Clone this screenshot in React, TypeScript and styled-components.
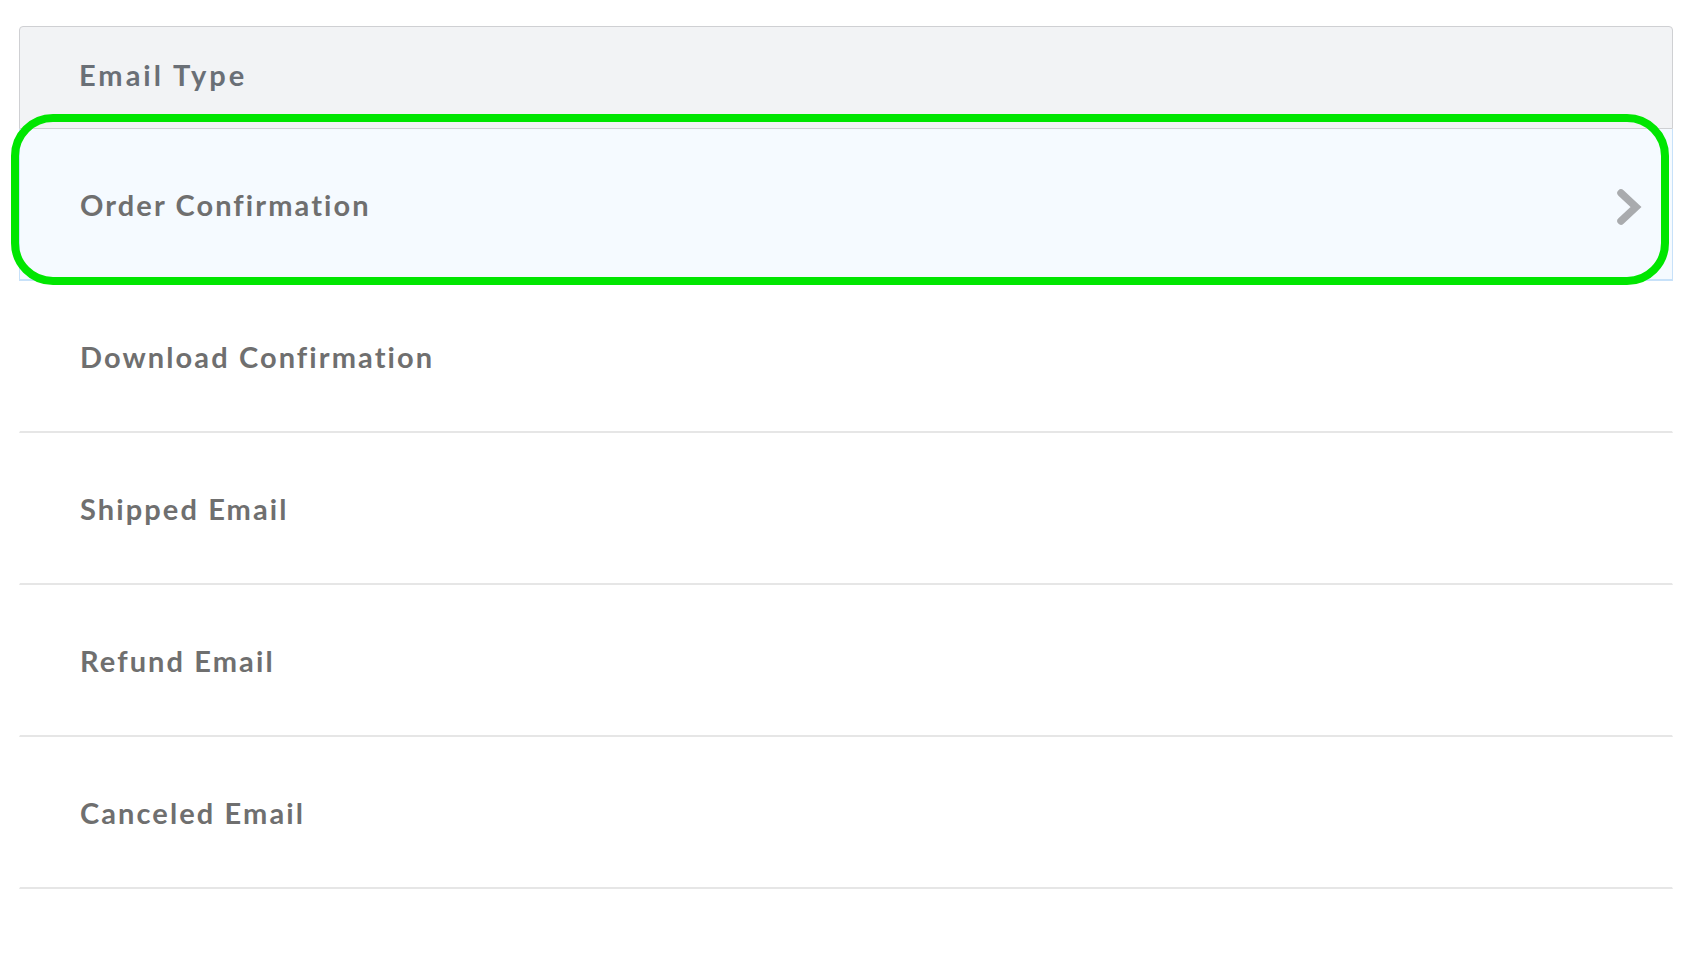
import styled, { createGlobalStyle } from "styled-components";

const GlobalStyle = createGlobalStyle`
    html, body {
        margin: 0;
        padding: 0;
        background: #ffffff;
    }
    body {
        font-family: Lato, "Open Sans", sans-serif;
    }
`;

const Page = styled.div`
    padding: 26px 31px 40px 19px;
`;

const Table = styled.div`
    display: flex;
    flex-direction: column;
`;

const HeaderRow = styled.div`
    box-sizing: border-box;
    height: 103px;
    display: flex;
    align-items: center;
    padding: 0 0 6px 59px;
    background: #f2f3f5;
    border: 1px solid #cfd0d3;
    border-radius: 4px 4px 0 0;
    font-size: 29px;
    font-weight: 700;
    letter-spacing: 3px;
    color: #6a6f76;
`;

const Row = styled.div<{ $active?: boolean }>`
    position: relative;
    height: 150px;
    display: flex;
    align-items: center;
    justify-content: space-between;
    padding: 0 30px 0 60px;
    font-size: 29px;
    font-weight: 700;
    letter-spacing: 2.1px;
    color: #6f6f6f;
    background: ${(p) => (p.$active ? "#f5faff" : "#ffffff")};
    border-bottom: 2px solid ${(p) => (p.$active ? "#c7e1f9" : "#e6e6e6")};
    border-left: 1px solid ${(p) => (p.$active ? "#c7e1f9" : "transparent")};
    border-right: 1px solid ${(p) => (p.$active ? "#c7e1f9" : "transparent")};
`;

const Chevron = styled.svg`
    width: 26px;
    height: 36px;
    flex: none;
    margin-top: 6px;
`;

// annotation ring drawn over the selected row
const Highlight = styled.div`
    position: absolute;
    z-index: 2;
    left: -9px;
    right: 3px;
    top: -15px;
    bottom: -6px;
    border: 8px solid #00e600;
    border-radius: 42px;
    pointer-events: none;
`;

const emailTypes = [
    "Order Confirmation",
    "Download Confirmation",
    "Shipped Email",
    "Refund Email",
    "Canceled Email",
];

export default function App() {
    return (
        <Page>
            <GlobalStyle />
            <Table>
                <HeaderRow>Email Type</HeaderRow>
                {emailTypes.map((name, i) => (
                    <Row key={name} $active={i === 0}>
                        <span>{name}</span>
                        {i === 0 && (
                            <>
                                <Chevron viewBox="0 0 26 36">
                                    <polyline
                                        points="5,4 20,18 5,32"
                                        fill="none"
                                        stroke="#a9abae"
                                        strokeWidth="7.5"
                                        strokeLinecap="round"
                                        strokeLinejoin="miter"
                                    />
                                </Chevron>
                                <Highlight />
                            </>
                        )}
                    </Row>
                ))}
            </Table>
        </Page>
    );
}
